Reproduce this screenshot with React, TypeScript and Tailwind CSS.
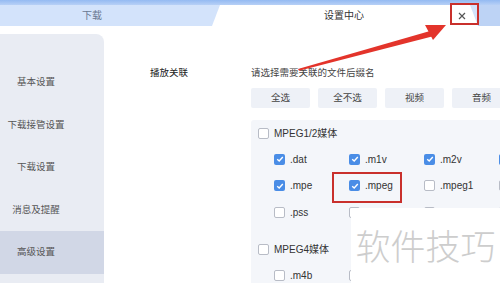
import React from 'react';

const font = '"Liberation Sans", "Noto Sans CJK SC", sans-serif';

const navItems = ['基本设置', '下载接管设置', '下载设置', '消息及提醒', '高级设置'];

type Item = { label: string; checked: boolean };

const mpeg12: Item[][] = [
  [
    { label: '.dat', checked: true },
    { label: '.m1v', checked: true },
    { label: '.m2v', checked: true },
    { label: '', checked: true },
  ],
  [
    { label: '.mpe', checked: true },
    { label: '.mpeg', checked: true },
    { label: '.mpeg1', checked: false },
    { label: '', checked: false },
  ],
  [
    { label: '.pss', checked: false },
    { label: '.mpg', checked: false },
    { label: '.mpv', checked: false },
    { label: '', checked: false },
  ],
];

const mpeg4: Item[][] = [
  [
    { label: '.m4b', checked: false },
    { label: '.m4p', checked: false },
    { label: '.m4v', checked: false },
    { label: '', checked: false },
  ],
];

function Box({ checked }: { checked: boolean }) {
  if (checked) {
    return (
      <span className="flex h-[11px] w-[11px] shrink-0 items-center justify-center rounded-[2px] bg-[#4a8de6]">
        <svg width="8" height="8" viewBox="0 0 8 8">
          <path d="M1.2 4.2 L3.2 6 L6.8 2" fill="none" stroke="#fff" strokeWidth="1.4" />
        </svg>
      </span>
    );
  }
  return <span className="h-[11px] w-[11px] shrink-0 rounded-[2px] border border-[#b8bcc6] bg-white" />;
}

function Row({ items }: { items: Item[] }) {
  return (
    <div className="flex h-[26.5px] items-center pl-[23px]">
      {items.map((it, i) => (
        <div key={i} className="flex w-[75px] shrink-0 items-center gap-[5px]">
          <Box checked={it.checked} />
          {it.label && <span className="text-[10px] text-[#333]">{it.label}</span>}
        </div>
      ))}
    </div>
  );
}

function Group({ title, rows }: { title: string; rows: Item[][] }) {
  return (
    <div>
      <div className="flex h-[26px] items-center gap-[5px] pl-[7px]">
        <Box checked={false} />
        <span className="text-[10px] text-[#333]">{title}</span>
      </div>
      {rows.map((r, i) => (
        <Row key={i} items={r} />
      ))}
    </div>
  );
}

export default function App() {
  return (
    <div className="relative h-[283px] w-[500px] overflow-hidden bg-white" style={{ fontFamily: font }}>
      {/* title bar */}
      <div className="h-[5px] bg-gradient-to-b from-[#94baf2] to-[#b7d0f6]" />
      <div className="flex h-[21px] bg-[#d3e3fb]">
        <div className="flex w-[184px] items-center justify-center text-[10px] text-[#6a7890]">下载</div>
        <div className="w-[28px]" />
        <div className="flex w-[266px] items-center bg-white pl-[22px] [clip-path:polygon(8px_0,calc(100%-8px)_0,100%_100%,0_100%)]">
          <span className="flex-1 text-center text-[10px] text-[#333]">设置中心</span>
          <span className="mr-[8px] flex w-[16px] items-center justify-center">
            <svg width="8" height="8" viewBox="0 0 8 8">
              <path d="M1 1 L7 7 M7 1 L1 7" stroke="#555" strokeWidth="1.2" />
            </svg>
          </span>
        </div>
        <div className="flex-1 bg-[#bdd3f5]" />
      </div>

      {/* body */}
      <div className="flex h-[257px]">
        <div className="mt-[8px] w-[104px] shrink-0 rounded-tr-[8px] bg-[#e9ecf3] pt-[27px]">
          {navItems.map((n, i) => (
            <div
              key={n}
              className={
                'flex h-[42.5px] w-[104px] items-center ' + (i === 4 ? 'bg-[#d1d7e6]' : '')
              }
            >
              <span className="w-[72px] text-center text-[9.5px] text-[#555]">{n}</span>
            </div>
          ))}
        </div>

        <div className="flex flex-1 pl-[46px] pt-[40px]">
          <div className="w-[101px] shrink-0 text-[9.5px] leading-[14px] text-[#222]">播放关联</div>
          <div className="flex flex-1 flex-col">
            <div className="text-[9.5px] leading-[14px] text-[#444]">请选择需要关联的文件后缀名</div>
            <div className="mt-[8px] flex gap-[8px]">
              {['全选', '全不选', '视频', '音频'].map((b) => (
                <div
                  key={b}
                  className="flex h-[20px] w-[59px] shrink-0 items-center justify-center rounded-[2px] bg-[#eef1f7] text-[9.5px] text-[#444]"
                >
                  {b}
                </div>
              ))}
            </div>
            <div className="mt-[12px] flex-1 rounded-tl-[3px] bg-[#f4f6fa]">
              <Group title="MPEG1/2媒体" rows={mpeg12} />
              <div className="h-[10.5px]" />
              <Group title="MPEG4媒体" rows={mpeg4} />
            </div>
          </div>
        </div>
      </div>

      {/* watermark */}
      <div className="absolute left-[351px] top-[208px] flex h-[75px] w-[149px] items-center justify-center bg-white">
        <span className="text-[35px] font-light text-[#cdcdcd]" style={{ fontFamily: '"Noto Sans CJK SC", sans-serif' }}>
          软件技巧
        </span>
      </div>

      {/* annotations */}
      <div className="absolute left-[332px] top-[172px] h-[31px] w-[70px] border-2 border-[#c9302c]" />
      <div className="absolute left-[450px] top-[3px] h-[22px] w-[29px] border-2 border-[#c9302c]" />
      <svg className="absolute left-0 top-0" width="500" height="283" viewBox="0 0 500 283">
        <polygon points="298,69 430,31 432,36.5 299,70.8" fill="#e3342b" />
        <polygon points="446,25 425,25 433,40" fill="#e3342b" />
      </svg>
    </div>
  );
}
